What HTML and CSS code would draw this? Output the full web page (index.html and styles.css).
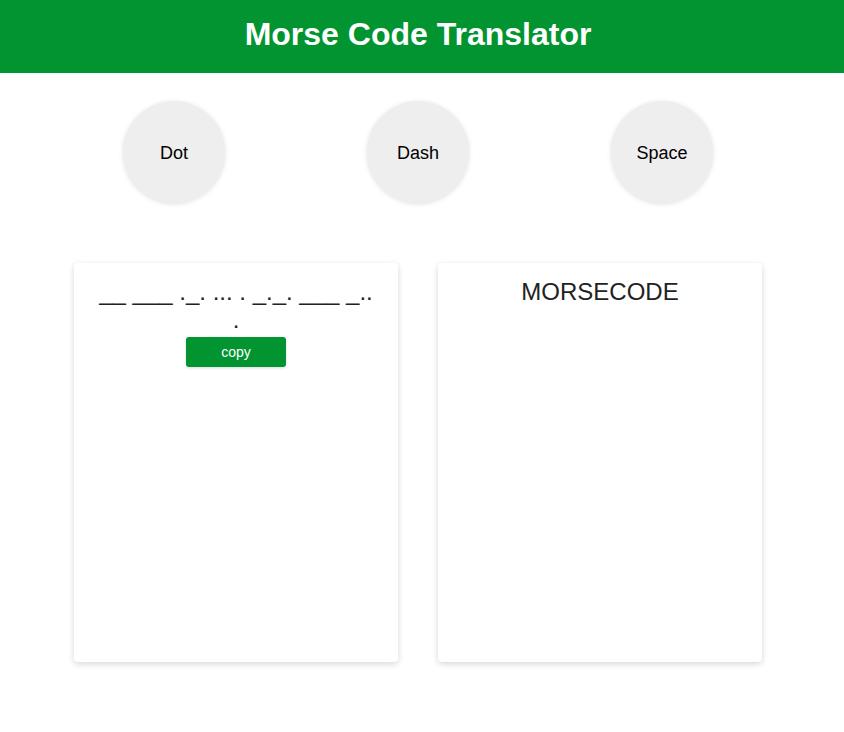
FILE: index.html
```
<!DOCTYPE html>
<html>
<head>
<meta charset="utf-8">
<link rel="stylesheet" href="styles.css">
</head>
<body>
<header class="header"><h1 class="title">Morse Code Translator</h1></header>
<div class="keys">
  <button class="key">Dot</button>
  <button class="key">Dash</button>
  <button class="key">Space</button>
</div>
<div class="cards">
  <div class="card">
    <p class="morse">__ ___ ._. ... . _._. ___ _.. .</p>
    <button class="copy">copy</button>
  </div>
  <div class="card">
    <p class="plain">MORSECODE</p>
  </div>
</div>
</body>
</html>
```
FILE: styles.css
```
html, body {
  margin: 0;
  padding: 0;
  background: #fff;
  font-family: "Liberation Sans", Arial, sans-serif;
}
.header {
  background: #019430;
  height: 73px;
  box-sizing: border-box;
  display: flex;
  align-items: center;
  justify-content: center;
  padding: 0 8px 4px 0;
}
.title {
  margin: 0;
  color: #fff;
  font-size: 32px;
  font-weight: bold;
  line-height: 37px;
}
.keys {
  display: flex;
  justify-content: center;
  gap: 142px;
  margin-top: 28px;
  padding-right: 8px;
}
.key {
  width: 102px;
  height: 102px;
  border-radius: 50%;
  border: none;
  background: #eeeeee;
  box-shadow: 0 1px 5px rgba(0, 0, 0, 0.12);
  font-family: "Liberation Sans", Arial, sans-serif;
  font-size: 18px;
  color: #000;
  padding: 2px 0 0 0;
}
.cards {
  display: flex;
  justify-content: center;
  gap: 40px;
  margin-top: 60px;
  padding: 0 8px 20px 0;
}
.card {
  width: 324px;
  height: 399px;
  box-sizing: border-box;
  background: #fff;
  border-radius: 4px;
  box-shadow: 0 2px 6px rgba(0, 0, 0, 0.16);
  padding: 15px 20px;
  display: flex;
  flex-direction: column;
  align-items: center;
}
.morse, .plain {
  margin: 0;
  font-size: 24px;
  color: #222;
  text-align: center;
}
.copy {
  margin-top: 3px;
  width: 100px;
  height: 30px;
  border: none;
  border-radius: 3px;
  background: #019430;
  color: #fff;
  font-family: "Liberation Sans", Arial, sans-serif;
  font-size: 14px;
  box-shadow: 0 1px 3px rgba(0, 0, 0, 0.15);
}
```
